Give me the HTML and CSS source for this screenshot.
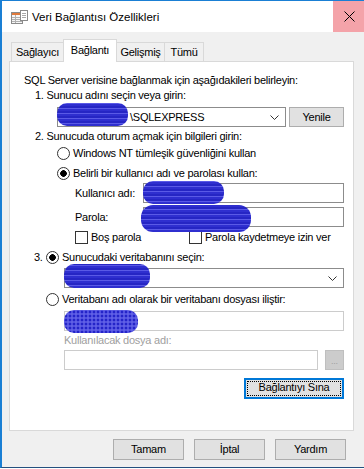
FILE: index.html
```html
<!DOCTYPE html>
<html lang="tr">
<head>
    <meta charset="UTF-8">
    <title>Veri Bağlantısı Özellikleri</title>
    <link rel="stylesheet" href="styles.css">
</head>
<body>
<div class="window">
    <div class="titlebar">
        <svg class="app-icon" width="17" height="15" viewBox="0 0 17 15">
            <rect x="0.5" y="2.5" width="11" height="11" fill="#f6f6f6" stroke="#8a8a8a"/>
            <rect x="1" y="3" width="10" height="2" fill="#e07a3c"/>
            <path d="M1 7.5H11M1 9.5H11M1 11.5H11M4.5 5V13" stroke="#b0b0b0"/>
            <rect x="9.5" y="0.5" width="7" height="10" fill="#ffffff" stroke="#8a8a8a"/>
            <path d="M11 3.5H15M11 5.5H15M11 7.5H15" stroke="#a8a8a8"/>
        </svg>
        <span class="title">Veri Bağlantısı Özellikleri</span>
        <div class="close">
            <svg width="11" height="11" viewBox="0 0 11 11"><path d="M0.5 0.5L10.5 10.5M10.5 0.5L0.5 10.5" stroke="#000" fill="none"/></svg>
        </div>
    </div>

    <div class="client">
        <div class="tabs">
            <div class="tab tab-provider">Sağlayıcı</div>
            <div class="tab tab-connection active">Bağlantı</div>
            <div class="tab tab-advanced">Gelişmiş</div>
            <div class="tab tab-all">Tümü</div>
        </div>

        <div class="panel">
            <div class="line">SQL Server verisine bağlanmak için aşağıdakileri belirleyin:</div>
            <div class="line step">1. Sunucu adını seçin veya girin:</div>
            <div class="field-row server-row">
                <div class="combo server-combo">
                    <span class="combo-text">\SQLEXPRESS</span>
                    <svg class="chevron" width="9" height="5" viewBox="0 0 9 5"><path d="M0.5 0.5L4.5 4.5L8.5 0.5" stroke="#333" fill="none"/></svg>
                    <span class="redact redact-server"></span>
                </div>
                <div class="btn btn-refresh">Yenile</div>
            </div>

            <div class="line step step2">2. Sunucuda oturum açmak için bilgileri girin:</div>
            <div class="radio-row nt-row">
                <span class="radio"></span>
                <span>Windows NT tümleşik güvenliğini kullan</span>
            </div>
            <div class="radio-row user-radio-row">
                <span class="radio checked"></span>
                <span>Belirli bir kullanıcı adı ve parolası kullan:</span>
            </div>
            <div class="field-row cred-row user-row">
                <span class="cred-label">Kullanıcı adı:</span>
                <div class="textbox">
                    <span class="redact redact-user"></span>
                </div>
            </div>
            <div class="field-row cred-row pass-row">
                <span class="cred-label">Parola:</span>
                <div class="textbox">
                    <span class="redact redact-pass"></span>
                </div>
            </div>
            <div class="check-row">
                <div class="check-item first-check">
                    <span class="checkbox"></span>
                    <span>Boş parola</span>
                </div>
                <div class="check-item">
                    <span class="checkbox"></span>
                    <span>Parola kaydetmeye izin ver</span>
                </div>
            </div>

            <div class="radio-row step3-row">
                <span class="step-num">3.</span>
                <span class="radio checked"></span>
                <span>Sunucudaki veritabanını seçin:</span>
            </div>
            <div class="field-row indent-row db-row">
                <div class="combo db-combo">
                    <svg class="chevron" width="9" height="5" viewBox="0 0 9 5"><path d="M0.5 0.5L4.5 4.5L8.5 0.5" stroke="#333" fill="none"/></svg>
                    <span class="redact redact-db"></span>
                </div>
            </div>
            <div class="radio-row attach-row">
                <span class="radio"></span>
                <span>Veritabanı adı olarak bir veritabanı dosyası iliştir:</span>
            </div>
            <div class="field-row indent-row attach-name-row">
                <div class="textbox disabled">
                    <span class="redact redact-file"></span>
                </div>
            </div>
            <div class="line disabled-text file-label">Kullanılacak dosya adı:</div>
            <div class="field-row indent-row file-row">
                <div class="textbox disabled"></div>
                <div class="btn browse-btn">...</div>
            </div>
            <div class="test-row">
                <div class="btn btn-test">Bağlantıyı Sına</div>
            </div>
        </div>

        <div class="footer">
            <div class="btn footer-btn">Tamam</div>
            <div class="btn footer-btn">İptal</div>
            <div class="btn footer-btn">Yardım</div>
        </div>
    </div>
</div>
</body>
</html>
```

FILE: styles.css
```css
:root{
    --win-blue:#1a7fd4; --face:#f0f0f0; --tab-border:#d9d9d9;
    --box-border:#8c8c8c; --btn-bg:#e1e1e1; --btn-border:#adadad;
    --grey-text:#a0a0a0; --redact:#3434d4;
}
html,body{margin:0;padding:0;background:#ffffff;}
body{
    font-family:"Liberation Sans", Arial, sans-serif; font-size:11px;
    letter-spacing:-0.25px; color:#000;
}
.window{
    width:364px; height:468px; box-sizing:border-box;
    border-left:2px solid var(--win-blue); border-top:1px solid var(--win-blue);
    border-bottom:1px solid #24507e; overflow:hidden;
}

/* title bar */
.titlebar{height:31px;background:#fff;display:flex;align-items:center;}
.app-icon{margin-left:9px;margin-top:2px;flex:none;}
.title{margin-left:4px;font-size:11.5px;letter-spacing:0;}
.close{margin-left:auto;width:31px;align-self:stretch;background:#f4a3a9;
    display:flex;align-items:center;justify-content:center;}
.close svg{margin-left:2px;}

/* client area */
.client{background:var(--face);height:435px;}
.tabs{display:flex;align-items:flex-end;height:22px;padding-top:7px;margin-left:7px;}
.tab{height:19px;line-height:19px;box-sizing:border-box;text-align:center;
    border:1px solid var(--tab-border);border-bottom:none;background:var(--face);}
.tab-provider{margin-left:2px;width:53px;}
.tab-connection{width:54px;margin-left:-1px;}
.tab-advanced{width:49px;margin-left:-1px;}
.tab-all{width:40px;margin-left:-1px;}
.tab.active{height:23px;line-height:20px;margin-bottom:-1px;background:#fff;
    position:relative;z-index:1;}

.panel{
    width:345px;height:370px;box-sizing:border-box;margin-left:7px;
    border:1px solid var(--tab-border);background:#fff;
    padding:11px 9px 0 14px;
}
.line{height:14px;line-height:14px;white-space:nowrap;}
.step{margin-left:11px;margin-top:1px;}
.step2{margin-top:2px;}

.field-row{display:flex;align-items:center;height:20px;}
.server-row{margin-left:33px;margin-top:5px;}
.combo,.textbox{position:relative;height:20px;box-sizing:border-box;
    border:1px solid var(--box-border);background:#fff;display:flex;align-items:center;}
.server-combo{width:230px;}
.combo-text{margin-left:72px;}
.chevron{margin-left:auto;margin-right:6px;}
.textbox{flex:1;}
.textbox.disabled{border-color:#cccccc;}

.btn{height:20px;line-height:18px;box-sizing:border-box;text-align:center;
    background:var(--btn-bg);border:1px solid var(--btn-border);}
.btn-refresh{width:55px;margin-left:3px;}

.radio-row{display:flex;align-items:center;height:14px;white-space:nowrap;}
.radio{width:13px;height:13px;box-sizing:border-box;border:1px solid #333;
    border-radius:50%;background:#fff;margin-right:3px;flex:none;}
.radio.checked{background:radial-gradient(circle, #000 0 3px, #fff 3.6px);}
.nt-row{margin-left:33px;margin-top:3px;}
.user-radio-row{margin-left:33px;margin-top:6px;}

.cred-row{margin-left:51px;}
.user-row{margin-top:3px;}
.pass-row{margin-top:4px;}
.cred-label{width:68px;flex:none;}

.check-row{display:flex;height:14px;align-items:center;margin-left:51px;margin-top:3px;}
.check-item{display:flex;align-items:center;}
.first-check{width:114px;}
.checkbox{width:13px;height:13px;box-sizing:border-box;border:1px solid #333;
    background:#fff;margin-right:3px;}

.step3-row{margin-left:10px;margin-top:6px;}
.step-num{width:12px;}
.indent-row{margin-left:40px;}
.db-row{margin-top:4px;}
.db-combo{flex:1;}
.attach-row{margin-left:22px;margin-top:4px;}
.attach-name-row{margin-top:5px;}
.disabled-text{color:var(--grey-text);}
.file-label{margin-left:40px;margin-top:2px;}
.file-row{margin-top:3px;}
.browse-btn{width:19px;margin-left:7px;background:#cccccc;border-color:#bfbfbf;
    color:var(--grey-text);font-size:9px;line-height:20px;}

.test-row{display:flex;justify-content:flex-end;margin-top:8px;}
.btn-test{width:100px;height:21px;line-height:17px;border:1px solid #0078d7;
    box-shadow:inset 0 0 0 1px #0078d7;position:relative;}
.btn-test::after{content:"";position:absolute;left:2px;top:2px;right:2px;bottom:2px;
    border:1px dotted #000;}

.footer{display:flex;justify-content:flex-end;gap:10px;margin-top:8px;padding-right:18px;}
.footer-btn{width:71px;height:21px;line-height:19px;}

/* blue scribbles hiding private names */
.redact{position:absolute;border-radius:10px;
    background:repeating-linear-gradient(0deg, #2f2fcf 0 2px, #5a5ae6 2px 3px, #2626c4 3px 5px);}
.redact-server{left:-1px;top:-5px;width:71px;height:23px;}
.redact-user{left:-1px;top:-3px;width:81px;height:23px;}
.redact-pass{left:-3px;top:-3px;width:110px;height:27px;border-radius:12px;}
.redact-db{left:-1px;top:-5px;width:86px;height:24px;}
.redact-file{left:-1px;top:-2px;width:74px;height:23px;
    background:radial-gradient(circle, #2424c8 0 1.4px, #5050e0 1.5px 2.1px, #9a9af2 2.2px) 0 0/4px 4px;}
```
